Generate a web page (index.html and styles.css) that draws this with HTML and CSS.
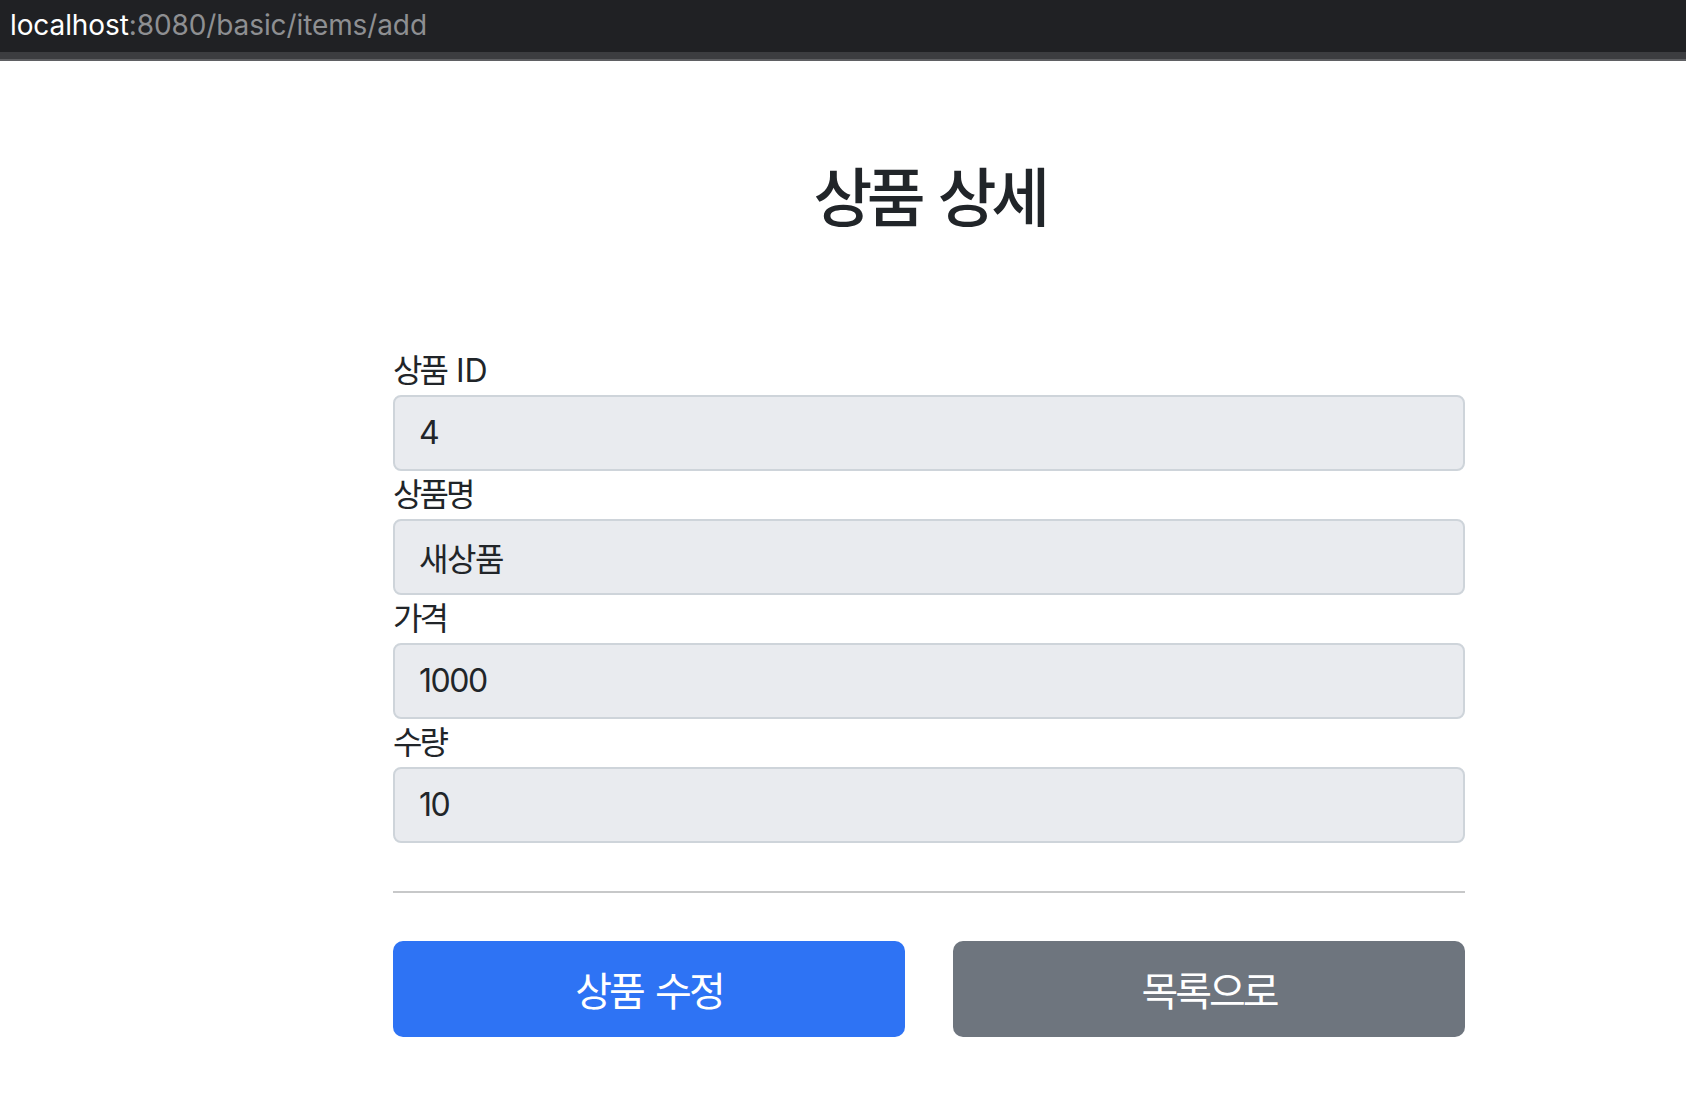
FILE: index.html
```html
<!DOCTYPE html>
<html lang="ko">
<head>
<meta charset="utf-8">
<title>상품 상세</title>
<link rel="stylesheet" href="styles.css">
</head>
<body>
<div class="urlbar">
  <div class="url"><span class="host">localhost</span><span class="path">:8080/basic/items/add</span></div>
</div>
<div class="urlbar-edge"></div>
<div class="container">
  <div class="header">
    <h2 class="title">상품 상세</h2>
  </div>
  <form class="form">
    <div class="field">
      <label class="label" for="itemId">상품 <span class="latin">ID</span></label>
      <input class="control" id="itemId" type="text" value="4" readonly>
    </div>
    <div class="field">
      <label class="label" for="itemName">상품명</label>
      <input class="control" id="itemName" type="text" value="새상품" readonly>
    </div>
    <div class="field">
      <label class="label" for="price">가격</label>
      <input class="control" id="price" type="text" value="1000" readonly>
    </div>
    <div class="field">
      <label class="label" for="quantity">수량</label>
      <input class="control" id="quantity" type="text" value="10" readonly>
    </div>
    <hr class="divider">
    <div class="actions">
      <button class="btn btn-primary" type="button">상품 수정</button>
      <button class="btn btn-secondary" type="button">목록으로</button>
    </div>
  </form>
</div>
</body>
</html>
```
FILE: styles.css
```css
* { box-sizing: border-box; }
html, body { margin: 0; padding: 0; background: #ffffff; }
body {
  font-family: Inter, "Noto Sans CJK KR", sans-serif;
  color: #212529;
}
.urlbar {
  height: 52px;
  background: #202124;
  display: flex;
  align-items: center;
  padding-left: 10px;
}
.url {
  font-family: Inter, "Noto Sans", sans-serif;
  font-size: 28px;
  line-height: 1;
  padding-bottom: 2px;
  letter-spacing: -0.1px;
}
.host { color: #ffffff; }
.path { color: #8e8f92; }
.urlbar-edge {
  height: 9px;
  background: #3c3d40;
  border-bottom: 2px solid #5f6063;
}
.container {
  width: 1072px;
  margin-left: 393px;
}
.header {
  padding: 99px 0 94px;
  text-align: center;
}
.title {
  margin: 0 0 16px;
  font-size: 64px;
  font-weight: 500;
  line-height: 1.2;
  letter-spacing: -5.5px;
  word-spacing: 6px;
}
.form { margin: 0; }
.field { display: flex; flex-direction: column; align-items: flex-start; }
.label {
  font-size: 32px;
  line-height: 48px;
  height: 48px;
  letter-spacing: -3px;
  word-spacing: 4px;
}
.latin { letter-spacing: 0; }
.control {
  display: block;
  width: 100%;
  height: 76px;
  padding: 0 24px;
  font-family: Inter, "Noto Sans CJK KR", sans-serif;
  font-size: 32px;
  color: #212529;
  background: #e9ebef;
  border: 2px solid #ced4da;
  border-radius: 8px;
  outline: none;
  letter-spacing: -1.5px;
}
.divider {
  margin: 48px 0;
  border: 0;
  border-top: 2px solid #c7c8c9;
  height: 0;
}
.actions {
  display: grid;
  grid-template-columns: 1fr 1fr;
  column-gap: 48px;
}
.btn {
  height: 96px;
  border: 0;
  border-radius: 10px;
  color: #ffffff;
  font-family: Inter, "Noto Sans CJK KR", sans-serif;
  font-size: 40px;
  letter-spacing: -3px;
  word-spacing: 4px;
  cursor: pointer;
}
.btn-primary { background: #2e73f4; }
.btn-secondary { background: #6e757e; }
```
